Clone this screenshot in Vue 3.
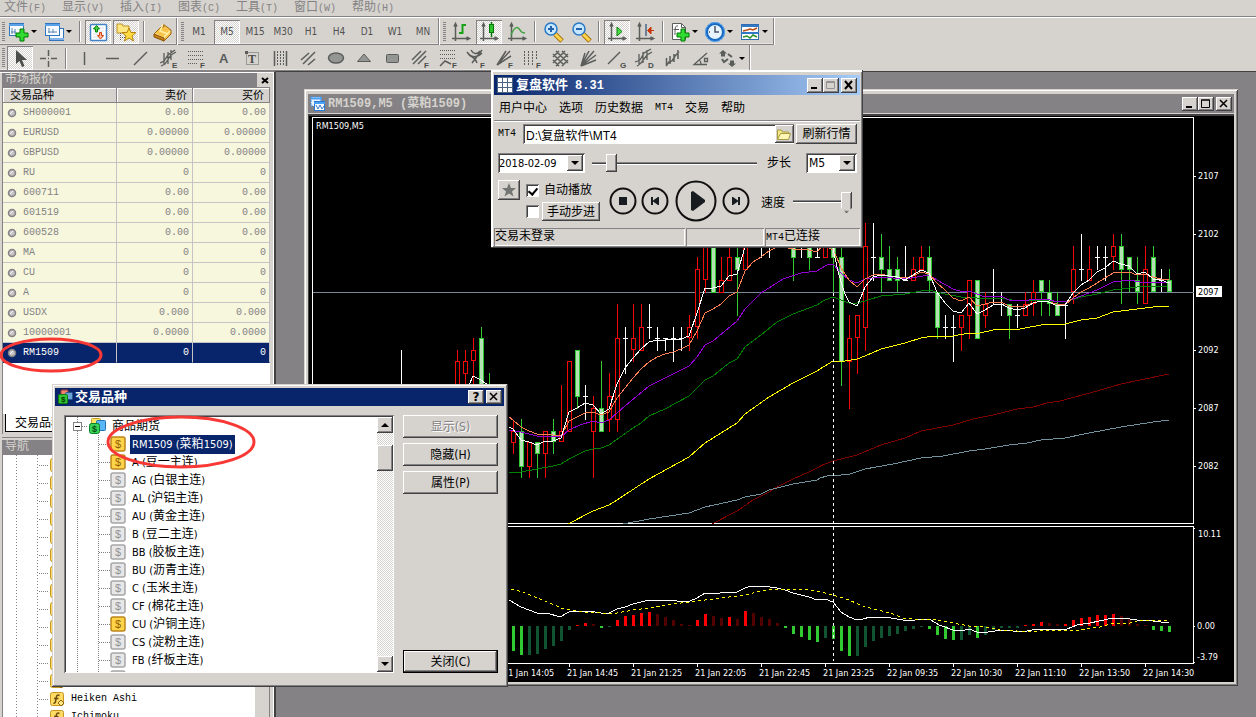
<script setup>
import { ref } from 'vue'

const menus = [['文件', 'F'], ['显示', 'V'], ['插入', 'I'], ['图表', 'C'], ['工具', 'T'], ['窗口', 'W'], ['帮助', 'H']]

const axes = '<path d="M6.500 4v17M3 18.500h17M5 6.500l1.500-3 1.500 3M17.500 17l3 1.500-3 1.500" stroke="#5a5d5a" stroke-width="1.500" fill="none"/>'
const plus = '<path d="M13 9h4v4h4v4h-4v4h-4v-4H9v-4h4z" fill="#31db31" stroke="#007b00"/>'
const letter = (c) => `<text x="16" y="22" font-size="8" font-weight="bold" font-family="Liberation Sans, sans-serif" fill="#4a4d4a">${c}</text>`
const g = (d, w = 1.5) => `<path d="${d}" stroke="#5a5d5a" stroke-width="${w}" fill="none"/>`
const glass = (sign) => `<path d="M14 14l7 7" stroke="#a57110" stroke-width="5"/><path d="M14 14l6.500 6.500" stroke="#ffd34a" stroke-width="3"/><circle cx="10" cy="9" r="6" fill="#c6e7ff" stroke="#2979c6" stroke-width="1.500"/><path d="${sign}" stroke="#2161ad" stroke-width="2"/>`

const icons = {
  order: '<rect x="2.500" y="3.500" width="14" height="12" fill="#f7fbff" stroke="#3175bd"/><path d="M2 5h15" stroke="#5aa2e7" stroke-width="2"/><path d="M5 8v6M4 12h5M8 9v5" stroke="#5a86ad" fill="none"/>' + plus,
  profiles: '<rect x="7.500" y="8.500" width="14" height="12" fill="#f7fbff" stroke="#3175bd"/><path d="M8 19h14" stroke="#84b2e7" stroke-width="2"/><rect x="3.500" y="3.500" width="14" height="12" fill="#f7fbff" stroke="#3175bd"/><path d="M3 5h15" stroke="#5aa2e7" stroke-width="2"/><path d="M6 12h9M7 8v5M11 9v4" stroke="#5a86ad"/>',
  watch: '<rect x="4.500" y="4.500" width="16" height="16" rx="1" fill="#fff" stroke="#4282c6" stroke-width="1.500"/><path d="M7 8h11M7 11h11M7 14h11M7 17h11" stroke="#d6dfe7"/><path d="M10.500 5.500l3 3.500h-2v3h-2V9h-2z" fill="#4ad34a" stroke="#008200"/><path d="M14.500 19l-3-3.500h2v-3h2v3h2z" fill="#ffb694" stroke="#d63c08"/>',
  navigator: '<path d="M3 6V4h5l1 2h6v7H3z" fill="#ffe784" stroke="#bd9221"/><path d="M6.500 13v8M8 17.500h3" stroke="#525552" stroke-dasharray="1 1"/><path d="M15 8l2 4.500h5l-4 3.500 1.500 5-4.500-3-4.500 3 1.500-5-4-3.500h5z" fill="#ffdb42" stroke="#b58210"/>',
  book: '<path d="M4 14l7-7 3 0-1-3 8 6v4l-7 7z" fill="#f7c34a" stroke="#9c6510"/><path d="M5 14l8 4 7-7M13 4l-3 7 8 3" fill="none" stroke="#ffefa5" stroke-width="1.500"/><path d="M4 14v3l10 4v-3z" fill="#c67d18" stroke="#8c5508"/>',
  bars: axes + '<path d="M13.500 4v10M13 13h-3M14 5h3" stroke="#18a218" stroke-width="2"/>',
  candle: axes + '<path d="M14.500 2v15" stroke="#087508" stroke-width="1.500"/><rect x="12.500" y="4.500" width="4" height="8" fill="#29c329" stroke="#087508"/>',
  line: axes + '<path d="M6 15c3-7 6-10 9-5 1 2 3 3 5 3" fill="none" stroke="#42a242" stroke-width="1.500"/>',
  zoomIn: glass('M7 9h6M10 6v6'),
  zoomOut: glass('M7 9h6'),
  scroll: axes + '<path d="M12 7l5 4.500-5 4.500z" fill="#4ade4a" stroke="#087d08"/>',
  shift: axes + '<path d="M13 4v12" stroke="#4a6584" stroke-width="1.500"/><path d="M21 10.500h-6M18 7l-3.500 3.500L18 14z" fill="#d63408" stroke="#c63408"/>',
  indicator: '<path d="M4.500 3.500h9l4 4v12h-13z" fill="#fff" stroke="#5a5d5a"/><path d="M13.500 3.500v4h4M10 6c-3-1-3 3-3 9M5.500 9.500H11" fill="none" stroke="#5a5d5a"/>' + plus,
  clock: '<circle cx="12" cy="12" r="8.500" fill="#e7f3ff" stroke="#1869bd" stroke-width="3"/><circle cx="12" cy="12" r="9.500" fill="none" stroke="#5aaaf7"/><path d="M12 7v5h4M12 6v1M6 12h1" fill="none" stroke="#4a5563" stroke-width="1.500"/>',
  template: '<rect x="3.500" y="4.500" width="17" height="15" fill="#fff" stroke="#316dad"/><path d="M3 6h18M3 13h18" stroke="#3179c6" stroke-width="2"/><path d="M5 11l4-1 3-1 3 1 4-2" stroke="#bd4910" fill="none" stroke-width="1.500"/><path d="M5 17l4-1 3 2 3-3 4 2" stroke="#299229" fill="none" stroke-width="1.500"/>',
  cursor: '<path d="M8 4v14l3.500-3 2.500 6 2.500-1-2.500-6H19z" fill="#4a4d4a"/>',
  cross: g('M12.500 4v6M12.500 15v6M4 12.500h6M15 12.500h6M12 12.500h1'),
  vline: g('M12.500 6v13'),
  hline: g('M6 12.500h13'),
  trend: g('M6 19L19 6'),
  channelE: g('M4 17l4-2 4-6 7-5M5 20l4-2 6-9 5-3M8 7v12M12 6v12M15 4v10', 1.3) + letter('E'),
  fiboF: '<path d="M4 5.500h15M4 9.500h15M4 13.500h15M4 17.500h9" stroke="#5a5d5a" stroke-dasharray="1 1"/>' + letter('F'),
  textA: '<text x="7" y="17" font-size="13" font-weight="bold" font-family="Liberation Sans, sans-serif" fill="#5a5d5a">A</text>',
  label: '<rect x="6.500" y="6.500" width="12" height="12" fill="none" stroke="#5a5d5a" stroke-dasharray="1 1"/><rect x="5" y="5" width="3" height="3" fill="#5a5d5a"/><text x="8" y="17" font-size="12" font-weight="bold" font-family="Liberation Serif, serif" fill="#4a4d4a">T</text>',
  cycles: g('M6.500 5v15M18.500 5v15') + '<path d="M9.500 5v15M12.500 5v15M15.500 5v15" stroke="#5a5d5a" stroke-dasharray="2 1"/>',
  parallels: g('M5 14l8-7M7 18L19 6M12 19l7-6'),
  ellipse: '<ellipse cx="12" cy="12" rx="7.500" ry="5" fill="#949694" stroke="#5a5d5a" stroke-width="1.500"/>',
  triangle: '<path d="M12 8l6.500 7.500h-13z" fill="#949694" stroke="#5a5d5a"/>',
  rect: '<rect x="6.500" y="8.500" width="12" height="8" rx="1" fill="#949694" stroke="#5a5d5a"/>',
  fibChannel: g('M4 14l9-9M5 18L18 5M10 18l8-8') + letter('F'),
  fibExpand: '<path d="M4 4.500h16M4 8.500h16M4 12.500h16" stroke="#5a5d5a" stroke-dasharray="1 1"/>' + g('M4 20l5-5 6 3') + letter('F'),
  fibArc: g('M3 6c4 6 10 6 15 1M7 4c2 4 6 5 9 1M8 17L18 4M5 9c4 2 7 4 8 8') + letter('F'),
  fibFan: g('M5 19L18 5M5 19L19 10M5 19L14 5') + letter('F'),
  fibTime: '<path d="M4.500 5v14M8.500 5v14M12.500 5v14M16.500 5v9" stroke="#5a5d5a" stroke-dasharray="2 1"/>' + letter('F'),
  grid: g('M5 8l11 11M5 14l6 6M8 5l12 12M14 5l6 6M5 17L17 5M5 11l6-6M8 20L20 8M14 20l6-6'),
  fan: g('M5 20L18 5M5 20L13 5M5 20L20 9M5 20L20 14M5 20L9 7'),
  gann: g('M4 18L16 6') + letter('G'),
  deviation: g('M3 16l5-2 4-7 7-4M5 20l4-3 6-8 5-3M7 8v11M11 6v11M15 4v10', 1.3) + letter('D'),
  regression: g('M6 20l3-4 3-1 3-5 4-4M6.500 12v8M10 10v8M14 8v8M18 4v9', 1.5),
  angle: g('M19 7L6 18.500h13M11 14c2 1 2 2 2 4M16.500 12.500h3v3h-3z', 1.3),
  arrows: '<path d="M8 4l4 3.500-2 0v3H6v-3H4zM17 21l-4-3.500h2v-3h4v3h2z" fill="#5a5d5a"/><path d="M7 13l2 3 4-3M13 8l4 3" stroke="#5a5d5a" stroke-width="2" fill="none"/>'
}

const fileTools = [
  { i: 'order', n: '新订单', drop: true }, { i: 'profiles', n: '图表配置', drop: true }, null,
  { i: 'watch', n: '市场报价', on: true }, { i: 'navigator', n: '导航', on: true }, null, { i: 'book', n: '终端' }
]
const periods = ['M1', 'M5', 'M15', 'M30', 'H1', 'H4', 'D1', 'W1', 'MN'].map((t) => ({ t, n: t, on: t === 'M5' }))
const chartTools = [
  { i: 'bars', n: '柱状图' }, { i: 'candle', n: '蜡烛图', on: true }, { i: 'line', n: '折线图' }, null,
  { i: 'zoomIn', n: '放大' }, { i: 'zoomOut', n: '缩小' }, null,
  { i: 'scroll', n: '自动滚动', on: true }, { i: 'shift', n: '图表平移' }, null,
  { i: 'indicator', n: '指标', drop: true }, { i: 'clock', n: '周期', drop: true }, { i: 'template', n: '模板', drop: true }
]
const drawTools = [
  { i: 'cursor', n: '光标', on: true }, { i: 'cross', n: '十字准线' }, null,
  ...['vline', 'hline', 'trend', 'channelE', 'fiboF', 'textA', 'label', 'cycles', 'parallels', 'ellipse', 'triangle', 'rect',
    'fibChannel', 'fibExpand', 'fibArc', 'fibFan', 'fibTime', 'grid', 'fan', 'gann', 'deviation', 'regression', 'angle'].map((i) => ({ i, n: i })),
  { i: 'arrows', n: '箭头', drop: true }
]
const bands = [[fileTools, periods, chartTools], [drawTools]]

const quotes = [
  ['SH000001', '0.00'], ['EURUSD', '0.00000'], ['GBPUSD', '0.00000'], ['RU', '0'], ['600711', '0.00'], ['601519', '0.00'],
  ['600528', '0.00'], ['MA', '0'], ['CU', '0'], ['A', '0'], ['USDX', '0.000'], ['10000001', '0.0000'], ['RM1509', '0']
]

const symbols = [
  ['RM1509', '菜粕', '1509', true], ['A', '豆一主连', '', true], ['AG', '白银主连', ''], ['AL', '沪铝主连', ''], ['AU', '黄金主连', ''],
  ['B', '豆二主连', ''], ['BB', '胶板主连', ''], ['BU', '沥青主连', ''], ['C', '玉米主连', ''], ['CF', '棉花主连', ''],
  ['CU', '沪铜主连', '', true], ['CS', '淀粉主连', ''], ['FB', '纤板主连', ''], ['']
]
const navItems = [...Array(13).fill(''), 'Heiken Ashi', 'Ichimoku']

const position = ref(9)
const speed = ref(100)
const auto = ref(true)
const manual = ref(false)
const path = ref('D:\\复盘软件\\MT4')

/* Candles: kind, x, high, low, body top, body bottom. r = rising, g = falling, w = doji */
const candles = [
  ['w', 401, 350, 410, 400, 400], ['r', 457, 350, 420, 361, 410], ['r', 465, 350, 410, 361, 374], ['r', 473, 338, 400, 350, 361],
  ['g', 481, 327, 410, 338, 400], ['g', 489, 373, 420, 390, 410],
  ['r', 513, 420, 454, 431, 443], ['g', 521, 419, 478, 431, 467], ['r', 529, 442, 478, 442, 467], ['g', 537, 442, 478, 442, 454],
  ['r', 545, 431, 478, 431, 454], ['g', 553, 419, 454, 431, 442], ['r', 561, 385, 442, 431, 442], ['r', 569, 361, 432, 361, 432],
  ['g', 577, 350, 409, 350, 397], ['w', 585, 385, 420, 396, 396], ['r', 593, 396, 478, 408, 432], ['g', 601, 361, 432, 408, 432],
  ['r', 609, 373, 432, 396, 420], ['r', 617, 304, 432, 338, 420], ['w', 625, 327, 374, 338, 338], ['r', 633, 304, 362, 338, 350],
  ['r', 641, 304, 351, 327, 351], ['w', 649, 304, 339, 327, 327], ['w', 657, 327, 351, 338, 338], ['w', 665, 338, 351, 338, 338],
  ['w', 673, 327, 362, 338, 338], ['w', 681, 327, 351, 338, 338], ['r', 689, 315, 351, 327, 338], ['r', 697, 257, 339, 269, 327],
  ['r', 705, 234, 293, 234, 280], ['g', 713, 234, 293, 240, 293], ['r', 721, 257, 293, 280, 293], ['r', 729, 240, 281, 257, 281],
  ['g', 737, 240, 316, 257, 270], ['r', 745, 234, 270, 240, 270], ['w', 761, 230, 258, 240, 240], ['w', 769, 230, 258, 240, 240],
  ['g', 793, 230, 281, 234, 258], ['w', 801, 230, 258, 240, 240], ['g', 809, 230, 270, 234, 258], ['w', 817, 230, 257, 257, 257],
  ['r', 825, 230, 258, 234, 258], ['g', 833, 230, 292, 234, 258], ['g', 841, 234, 386, 257, 362], ['r', 849, 315, 409, 338, 362],
  ['r', 857, 315, 374, 315, 338], ['r', 865, 223, 351, 246, 328], ['w', 873, 223, 281, 257, 257], ['g', 881, 234, 292, 257, 270],
  ['g', 889, 246, 281, 269, 281], ['g', 897, 257, 292, 269, 281], ['w', 905, 246, 281, 280, 280], ['r', 913, 257, 281, 269, 281],
  ['r', 921, 246, 270, 257, 270], ['g', 929, 246, 292, 257, 281], ['g', 937, 292, 339, 292, 328], ['w', 945, 315, 339, 327, 327],
  ['w', 953, 315, 362, 327, 327], ['r', 961, 315, 351, 315, 328], ['r', 969, 280, 339, 280, 316], ['g', 977, 280, 339, 280, 339],
  ['r', 985, 292, 328, 304, 316], ['w', 993, 269, 304, 292, 292], ['w', 1001, 292, 316, 304, 304], ['g', 1009, 304, 339, 304, 316],
  ['w', 1017, 304, 328, 315, 315], ['r', 1025, 292, 316, 304, 316], ['r', 1033, 280, 316, 292, 304], ['g', 1041, 280, 316, 280, 292],
  ['g', 1049, 280, 316, 292, 304], ['g', 1057, 292, 316, 304, 316], ['w', 1065, 304, 339, 305, 305], ['r', 1073, 246, 304, 269, 292],
  ['w', 1081, 234, 281, 269, 269], ['r', 1089, 246, 281, 269, 281], ['w', 1097, 246, 270, 257, 257], ['w', 1105, 246, 281, 257, 257],
  ['r', 1113, 234, 270, 246, 257], ['g', 1121, 234, 304, 246, 270], ['g', 1129, 257, 292, 257, 270], ['g', 1137, 257, 304, 280, 292],
  ['r', 1145, 246, 304, 269, 304], ['g', 1153, 246, 292, 257, 292], ['w', 1161, 269, 292, 280, 280], ['g', 1169, 269, 292, 280, 292]
].map(([k, x, h, l, t, b]) => ({ k, x, h, l, t, b }))
const ink = { r: '#f70808', g: '#31cb31', w: '#ffffff' }

/* Curve runs: origin x, origin y, then point pairs in thirds of a pixel */
const run = (ox, oy, s) => s.split(' ').map((p) => {
  const [x, y] = p.split(',').map(Number)
  return `${Math.round(ox + x / 3)},${Math.round(oy + y / 3)}`
}).join(' ')
const curves = [
  { c: '#800000', p: run(500, 240, '637,851 712,813 760,780 808,756 832,740 880,717 928,697 976,673') + ' ' + run(820, 350, '0,349 40,333 112,316 184,286 256,263 304,244 352,233 400,224 460,207 520,196 592,178 640,170 680,158 720,153 832,124 904,101 976,88 1048,73') },
  { c: '#7392a0', p: run(500, 240, '370,851 448,838 568,818 616,802 712,781 736,771 784,761 808,749 880,732 952,719') + ' ' + run(820, 350, '0,385 20,378 64,374 90,371 136,358 220,342 304,325 370,318 448,304 496,298 568,286 620,280 664,270 736,263 808,250 904,231 1000,217 1048,211') },
  { c: '#ffff00', p: run(500, 240, '205,851 280,812 328,796 352,779 448,716 568,652 616,609 712,548 736,521 808,470 880,430 952,392') + ' ' + run(820, 90, '0,836 40,814 76,814 112,807 136,797 184,778 256,760 304,744 340,737 400,737 448,728 480,730 520,721 600,717 664,706 736,703 784,691 832,683 880,667 928,661 1000,652 1048,649') },
  { c: '#008000', p: run(500, 240, '27,700 64,696 112,687 160,679 184,672 208,656 256,634 280,628 304,625 328,616 400,563 424,548 448,529 496,508 568,469 616,421 640,407 688,370 712,356 736,322 784,284 832,246 880,222 952,196') + ' ' + run(820, 90, '0,640 16,629 40,622 88,639 112,640 136,632 184,619 256,613 304,602 328,601 376,612 424,622 448,621 496,628 544,625 592,632 664,630 712,635 745,633 784,622 832,612 880,599 952,592 1040,589') },
  { c: '#9400d3', p: run(500, 240, '27,571 64,577 112,589 184,590 208,570 240,556 280,544 304,548 328,541 376,499 448,438 520,403 568,379 592,352 616,316 640,303 712,244 736,206 784,160 850,118 904,100 952,92') + ' ' + run(820, 90, '0,536 20,525 40,523 64,549 88,571 112,580 136,568 184,560 256,566 328,555 352,570 400,598 430,605 448,602 472,613 496,620 544,617 568,629 616,632 640,628 690,629 712,635 745,633 784,619 832,600 880,577 928,571 960,575 1040,576') },
  { c: '#ff7f50', p: run(500, 240, '27,531 40,540 64,562 88,572 112,582 136,583 160,586 184,587 208,543 232,530 256,520 280,517 304,526 328,517 352,475 376,445 400,415 424,388 448,365 472,352 496,343 520,335 544,327 568,316 592,273 616,218 640,206 664,193 688,168 712,155 736,93 760,65 784,50 808,32 830,22 864,24 880,28 904,26 928,29 952,36') + ' ' + run(820, 90, '10,465 40,480 52,503 64,533 88,570 112,592 136,567 160,556 184,553 208,557 232,560 256,563 280,557 304,547 328,552 352,578 376,601 400,624 424,634 448,622 472,647 496,642 520,637 544,637 568,648 592,652 616,649 640,638 664,633 688,637 712,643 736,644 760,625 784,607 808,594 832,578 856,563 880,548 904,547 928,545 952,555 976,552 1000,562 1024,567 1048,571') },
  { c: '#ffffff', p: '466,392 473,376 481,380 489,386' },
  { c: '#ffffff', p: run(500, 240, '27,562 40,568 64,600 88,605 112,615 136,603 160,604 184,594 208,517 232,503 256,489 280,496 304,522 328,508 352,432 376,385 400,355 424,327 448,305 472,300 496,301 520,298 544,298 568,287 592,220 616,143 640,145 664,138 688,108 712,102 736,20 760,0') },
  { c: '#ffffff', p: run(820, 90, '30,440 40,473 52,530 64,575 76,612 88,636 112,648 124,620 136,590 160,560 184,555 208,559 232,561 256,570 280,556 304,539 328,550 352,605 376,640 400,663 424,668 448,638 472,672 496,661 520,644 544,642 568,655 592,660 616,655 640,640 664,632 688,636 712,648 736,646 760,610 784,584 808,570 832,546 856,533 880,512 904,522 928,527 952,553 976,547 1000,568 1024,571 1048,580') },
  { c: '#ffffff', p: run(500, 520, '27,241 64,262 112,280 140,280 180,290 208,277 240,274 285,275 304,280 328,280 352,268 376,260 400,252 448,241 510,241 530,244 570,244 592,234 616,220 640,223 680,217 712,217 736,203 752,199 790,199 832,205 856,210 880,220 928,232 952,241 976,237 1000,247 1024,275 1048,292 1072,301 1088,296') + ' ' + run(870, 540, '0,232 45,232 100,241 135,241 160,238 184,241 208,256 250,270 272,274 296,268 320,276 355,276 395,271 430,273 470,273 500,268 590,268 620,256 660,250 730,233 780,236 800,241 850,242 896,249') },
  { c: '#ffff00', d: '3 3', p: run(500, 520, '33,206 70,215 112,233 150,250 184,264 220,271 256,276 310,280 350,278 400,271 448,265 496,256 568,246 616,240 664,235 736,226 784,214 832,208 900,208 950,212 1000,224 1048,241 1096,260') + ' ' + run(870, 540, '0,205 60,219 100,233 130,238 184,238 250,248 296,258 345,262 390,270 440,274 500,273 560,271 630,269 690,261 720,253 780,248 810,241 896,241') }
]

/* Histogram starts at x = 513 with an 8px step: G/g = falling bright/dark, R/r = rising bright/dark */
const hues = { G: '#31cb31', g: '#105531', R: '#ff0000', r: '#520000' }
const histogram = ('G25 G29 g29 g28 g23 g20 g15 g4 R1 R3 r2 G2 g1 R6 R10 R11 R13 R14 r12 r9 r6 r2 r1 R6 R12 r10 r8 R9 r7 R15 r13 r9 r7 r3 ' +
  'G2 G8 G11 G14 G16 g12 G13 G25 G30 g30 g21 g15 g12 g10 g8 g5 g3 g1 G3 G9 G13 G14 g14 g9 G12 g9 g4 g2 g2 g2 ' +
  'R1 R2 R4 r3 r2 R2 R6 R8 R9 R11 R11 R12 r10 r7 r2 r1 G4 G5 G6').split(' ').map((s, i) => {
  const h = Number(s.slice(1))
  const up = s[0].toLowerCase() === 'r'
  return { x: 512 + i * 8, y: up ? 626 - h : 626, h, c: hues[s[0]] }
})
const prices = [[2107, 176], [2102, 234], [2092, 350], [2087, 408], [2082, 466]]
const times = ['21 Jan 14:05', '21 Jan 14:45', '21 Jan 21:25', '21 Jan 22:05', '21 Jan 22:45', '21 Jan 23:25', '22 Jan 09:35', '22 Jan 10:30', '22 Jan 11:10', '22 Jan 13:50', '22 Jan 14:30']
</script>

<template>
  <div class="app">
    <nav class="menubar">
      <button v-for="m in menus" :key="m[1]" type="button">{{ m[0] }}<span class="half">({{ m[1] }})</span></button>
    </nav>
    <div v-for="(band, bi) in bands" :key="bi" class="band">
      <div v-for="(group, gi) in band" :key="gi" class="group">
        <i class="grip"></i>
        <template v-for="(tool, ti) in group" :key="ti">
          <i v-if="!tool" class="sep"></i>
          <button v-else type="button" class="tool" :class="{ on: tool.on, drop: tool.drop }" :aria-label="tool.n">
            <template v-if="tool.t">{{ tool.t }}</template>
            <svg v-else width="24" height="24" viewBox="0 0 24 24" v-html="icons[tool.i]"></svg>
            <i v-if="tool.drop" class="caret"></i>
          </button>
        </template>
      </div>
    </div>

    <div class="workspace">
      <aside class="side">
        <section class="panel quotes">
          <header class="ptitle"><span>市场报价</span><button type="button" aria-label="关闭市场报价"><svg width="9" height="9" viewBox="0 0 9 9"><path d="M1 2l6 5M7 2L1 7" stroke="#000" stroke-width="2" /></svg></button></header>
          <div class="pbody">
            <table>
              <colgroup><col class="c1" /><col class="c2" /><col /></colgroup>
              <thead><tr><th>交易品种</th><th>卖价</th><th>买价</th></tr></thead>
              <tbody>
                <tr v-for="q in quotes" :key="q[0]" :class="{ sel: q[0] === 'RM1509' }">
                  <td><svg width="10" height="10" viewBox="0 0 10 10"><circle cx="5" cy="5" r="3.500" fill="#c6c3c6" stroke="#848284" stroke-width="1.500" /><path d="M3 6l3-3" stroke="#f7f7f7" /></svg>{{ q[0] }}</td>
                  <td>{{ q[1] }}</td><td>{{ q[1] }}</td>
                </tr>
              </tbody>
            </table>
            <div class="tabs"><button type="button">交易品种</button></div>
          </div>
        </section>
        <section class="panel nav">
          <header class="ptitle"><span>导航</span></header>
          <div class="nbody">
            <ul>
              <li v-for="(n, i) in navItems" :key="i">
                <svg width="16" height="16" viewBox="0 0 16 16"><rect x="1.500" y="1.500" width="13" height="13" rx="2" fill="#ffdb63" stroke="#c69621" /><path d="M10.500 4.500c-2-1-3 0-3.200 2l-.8 4c-.3 1.500-1 2-2 1.500M5 7.500h4.500" fill="none" stroke="#6b4d10" stroke-width="1.500" /><path d="M12 9l3 3-3 3-3-3z" fill="#ffe784" stroke="#8c6510" /></svg>
                <span>{{ n }}</span>
              </li>
            </ul>
            <i class="ntrack"></i>
          </div>
        </section>
      </aside>

      <main class="mdi">
        <section class="chartwin">
          <header>
            <svg width="16" height="16" viewBox="0 0 16 16"><rect x="1" y="1" width="10" height="9" fill="#e7f3ff" stroke="#4292e7" stroke-dasharray="2 1" /><rect x="4.500" y="5.500" width="10" height="9" fill="#fff" stroke="#2979d6" /><path d="M1 2.500h11M4 7h11" stroke="#4aa2f7" stroke-width="2" /><path d="M6 9l2 4 2-4 2 4 2-3" fill="none" stroke="#317dce" /></svg>
            <h2>RM1509,M5 (<span>菜粕</span>1509)</h2>
            <button type="button" class="wb raised" aria-label="最小化图表"><svg width="16" height="14" viewBox="0 0 16 14"><path d="M4 10h6" stroke="#000" stroke-width="2" /></svg></button>
            <button type="button" class="wb raised" aria-label="最大化图表"><svg width="16" height="14" viewBox="0 0 16 14"><path d="M3.500 3v7.500h8V3zM3 3h9" fill="none" stroke="#000" /></svg></button>
            <button type="button" class="wb raised last" aria-label="关闭图表"><svg width="16" height="14" viewBox="0 0 16 14"><path d="M4 3l7 7M11 3l-7 7" stroke="#000" stroke-width="1.500" /></svg></button>
          </header>
          <svg class="chart" viewBox="309 116 925 566" preserveAspectRatio="xMinYMin meet">
            <g fill="none" shape-rendering="crispEdges">
              <path d="M312.500 117.500h881v406h-881zM312.500 526.500h881v137h-881z" stroke="#fff" />
              <path d="M313 292.500h881" stroke="#778899" />
              <g v-for="c in candles" :key="c.x" :stroke="ink[c.k]">
                <path :d="`M${c.x + .5} ${c.h}V${c.l}`" />
                <path v-if="c.k === 'w'" :d="`M${c.x - 2} ${c.t + .5}h5`" />
                <rect v-else :x="c.x - 1.5" :y="c.t + .5" width="4" :height="c.b - c.t - 1" :fill="c.k === 'g' ? '#b5dfb5' : '#000'" />
              </g>
              <rect v-for="b in histogram" :key="b.x" :x="b.x" :y="b.y" width="3" :height="b.h" :fill="b.c" />
              <polyline v-for="(c, i) in curves" :key="i" :points="c.p" :stroke="c.c" :stroke-dasharray="c.d" />
              <path d="M833.500 293V661" stroke="#fff" stroke-dasharray="3 3" />
              <path v-for="p in prices" :key="p[0]" :d="`M1194 ${p[1] + .5}h2`" stroke="#fff" />
              <path d="M1194 528.500h1M1194 626.500h1M1194 662.500h1" stroke="#fff" />
              <path v-for="(t, i) in times" :key="t" :d="`M${505.5 + i * 64} 664v3`" stroke="#fff" />
              <rect x="1196" y="286" width="26" height="11" fill="#fff" />
            </g>
            <g class="lbl">
              <text x="316" y="129" class="head">RM1509,M5</text>
              <text v-for="p in prices" :key="p[0]" x="1198" :y="p[1] + 3">{{ p[0] }}</text>
              <text x="1198" y="295" class="now">2097</text>
              <text x="1198" y="537">10.11</text><text x="1197" y="629">0.00</text><text x="1197" y="660">-3.79</text>
              <text v-for="(t, i) in times" :key="t" :x="503 + i * 64" y="676">{{ t }}</text>
            </g>
          </svg>
        </section>
      </main>
    </div>

    <section class="replay">
      <header>
        <svg width="16" height="16" viewBox="0 0 16 16"><rect width="16" height="16" fill="#4a6584" /><path d="M1 1h4v4H1zM6 1h4v4H6zM11 1h4v4h-4zM1 6h4v4H1zM6 6h4v4H6zM11 6h4v4h-4zM1 11h4v4H1zM6 11h4v4H6zM11 11h4v4h-4z" fill="#fff" /></svg>
        <h2>复盘软件 <span>8.31</span></h2>
        <button type="button" class="wb raised" aria-label="最小化"><svg width="16" height="15" viewBox="0 0 16 15"><path d="M4 10h6" stroke="#000" stroke-width="2" /></svg></button>
        <button type="button" class="wb raised" aria-label="最大化" disabled><svg width="16" height="15" viewBox="0 0 16 15"><path d="M3.500 3.500h8v7h-8zM3 4.500h9" fill="none" stroke="#949294" /></svg></button>
        <button type="button" class="wb raised last" aria-label="关闭"><svg width="16" height="15" viewBox="0 0 16 15"><path d="M4 3l7 8M11 3l-7 8" stroke="#000" stroke-width="2" /></svg></button>
      </header>
      <nav>
        <button type="button">用户中心</button><button type="button">选项</button><button type="button">历史数据</button><button type="button" class="half">MT4</button><button type="button">交易</button><button type="button">帮助</button>
      </nav>
      <div class="row r1">
        <label for="path" class="half">MT4</label>
        <div class="pathbox"><input id="path" v-model="path" type="text" /><button type="button" class="raised" aria-label="浏览"><svg width="16" height="14" viewBox="0 0 16 14"><path d="M1.500 12V3h4l1 2h6v2" fill="#f7e784" stroke="#a59a42" /><path d="M1.500 12.500l3-6h10l-2 6z" fill="#fff7b5" stroke="#a59a42" /></svg></button></div>
        <button type="button" class="btn raised refresh">刷新行情</button>
      </div>
      <div class="row r2">
        <div class="combo date"><select aria-label="日期"><option>2018-02-09</option></select><i class="arrow raised"></i></div>
        <input v-model="position" class="range" type="range" aria-label="进度" />
        <label for="step">步长</label>
        <div class="combo step"><select id="step"><option>M5</option></select><i class="arrow raised"></i></div>
      </div>
      <div class="row r3">
        <button type="button" class="btn raised star" aria-label="收藏"><svg width="16" height="16" viewBox="0 0 16 16"><path d="M8 1l2 5h5l-4 3.500 1.500 5L8 11.500l-4.500 3 1.500-5L1 6h5z" fill="#737573" /></svg></button>
        <div class="opts">
          <label><input v-model="auto" type="checkbox" />自动播放</label>
          <div><input v-model="manual" type="checkbox" aria-label="手动步进" /><button type="button" class="btn raised">手动步进</button></div>
        </div>
        <div class="play">
          <button type="button" aria-label="停止"><svg width="28" height="28" viewBox="0 0 28 28"><circle cx="14" cy="14" r="12.500" /><path d="M10 10h8v8h-8z" /></svg></button>
          <button type="button" aria-label="上一步"><svg width="28" height="28" viewBox="0 0 28 28"><circle cx="14" cy="14" r="12.500" /><path d="M10 10h2v3.500l5-3.500h1v8h-1l-5-3.500V18h-2z" /></svg></button>
          <button type="button" aria-label="播放"><svg width="42" height="42" viewBox="0 0 42 42"><circle cx="21" cy="21" r="19.500" /><path d="M16 12l2-1 12 9v2l-12 9-2-1z" /></svg></button>
          <button type="button" aria-label="下一步"><svg width="28" height="28" viewBox="0 0 28 28"><circle cx="14" cy="14" r="12.500" /><path d="M18 10h-2v3.500L11 10h-1v8h1l5-3.500V18h2z" /></svg></button>
        </div>
        <label for="speed" class="spd">速度</label>
        <input id="speed" v-model="speed" class="range point" type="range" />
      </div>
      <footer><span>交易未登录</span><span></span><span><b class="half">MT4</b>已连接</span></footer>
    </section>

    <section class="dialog">
      <header>
        <svg width="16" height="16" viewBox="0 0 16 16"><rect x="4" y="1" width="7" height="6" rx="1" fill="#ef8273" stroke="#a53c31" /><rect x="8.500" y="3.500" width="7" height="7" rx="1" fill="#6ba2d6" stroke="#29558c" /><rect x="1.500" y="5.500" width="9" height="9" rx="1" fill="#31c331" stroke="#107d10" /><text x="4" y="13" font-size="8" font-weight="bold" font-family="Liberation Sans, sans-serif" fill="#003800">$</text></svg>
        <h2>交易品种</h2>
        <button type="button" class="wb raised" aria-label="帮助">?</button>
        <button type="button" class="wb raised last" aria-label="关闭对话框"><svg width="16" height="14" viewBox="0 0 16 14"><path d="M4 3l7 7M11 3l-7 7" stroke="#000" stroke-width="1.500" /></svg></button>
      </header>
      <div class="dbody">
        <div class="list">
          <ul>
            <li class="root">
              <i class="box"></i><i class="dots"></i>
              <svg width="18" height="18" viewBox="0 0 18 18"><rect x="3.500" y="1.500" width="9" height="9" rx="1" fill="#ffe763" stroke="#c69a29" /><rect x="8.500" y="3.500" width="9" height="10" rx="1" fill="#5ab6f7" stroke="#2175b5" /><rect x="1.500" y="6.500" width="10" height="10" rx="2" fill="#39d35a" stroke="#088229" /><text x="4" y="15" font-size="9" font-weight="bold" font-family="Liberation Sans, sans-serif" fill="#004d10">$</text></svg>
              <span>商品期货</span>
            </li>
            <li v-for="(s, i) in symbols" :key="i" :class="{ sel: i === 0 }">
              <i class="dots"></i>
              <svg width="16" height="16" viewBox="0 0 16 16" :class="s[3] ? 'gold' : 'grey'"><rect x="1" y="1" width="14" height="14" rx="2" stroke-width="1.500" /><text v-if="s[0]" x="5" y="12" font-size="11" font-family="Liberation Sans, sans-serif">$</text></svg>
              <span v-if="s[0]">{{ s[0] }} (<b>{{ s[1] }}</b>{{ s[2] }})</span>
            </li>
          </ul>
          <div class="scroll"><button type="button" class="raised up" aria-label="向上滚动"></button><i class="raised thumb"></i><button type="button" class="raised down" aria-label="向下滚动"></button></div>
        </div>
        <div class="actions">
          <button type="button" class="btn raised" disabled>显示(S)</button>
          <button type="button" class="btn raised">隐藏(H)</button>
          <button type="button" class="btn raised">属性(P)</button>
          <button type="button" class="btn raised close">关闭(C)</button>
        </div>
      </div>
    </section>

    <svg class="marks" width="260" height="480" viewBox="0 0 260 480" aria-hidden="true">
      <g fill="none" stroke="#f73835" stroke-width="3"><ellipse cx="51" cy="355" rx="50" ry="16" /><ellipse cx="181" cy="442" rx="73" ry="25" /></g>
    </svg>
  </div>
</template>

<style>
body { background: #848284; }
</style>

<style scoped>
.app { position: relative; display: flex; flex-direction: column; height: 100vh; overflow: hidden; background: #d6d3ce; color: #000; font: 12px/16px "DejaVu Sans Condensed", "Noto Sans CJK SC", sans-serif; }
.app * { box-sizing: border-box; }
button { margin: 0; padding: 0; border: 0; background: none; color: inherit; font: inherit; }
h2 { margin: 0; font-weight: bold; font-size: 13px; }
svg { display: block; flex: none; }
.half { font-family: "Liberation Mono", "Noto Sans CJK SC", monospace; font-size: 10px; font-weight: normal; }
.raised { background: #d6d3ce; box-shadow: inset -1px -1px #424142, inset 1px 1px #fff, inset -2px -2px #848284; }

.menubar { display: flex; gap: 16px; flex: none; height: 18px; padding-left: 4px; color: #848284; border-bottom: 1px solid #fff; box-shadow: inset 0 -1px #848284; }
.menubar button { height: 14px; line-height: 14px; white-space: nowrap; width: 42px; text-align: left; }

.band { display: flex; flex: none; height: 27px; }
.band + .band { height: 26px; }
.group { display: flex; align-items: center; gap: 2px; padding: 0 2px; border-right: 1px solid #fff; box-shadow: inset -1px 0 #848284, inset 0 -1px #848284, inset 0 -2px #e7e3de; }
.group + .group { padding: 0 3px; }
.grip { width: 3px; height: 20px; background: repeating-linear-gradient(#848284 0 1px, #d6d3ce 1px 2px); }
.sep { width: 2px; height: 21px; margin: 0 2px; background: #848284; border-right: 1px solid #fff; }
.tool { display: flex; align-items: center; justify-content: center; width: 26px; height: 24px; color: #525152; font-size: 10px; }
.tool.on { background: conic-gradient(#fff 25%, #d6d3ce 0 50%, #fff 0 75%, #d6d3ce 0) 0 0/2px 2px; box-shadow: inset 1px 1px #848284, inset -1px -1px #fff; }
.tool.drop { width: 33px; justify-content: flex-start; }
.caret { flex: none; border: 3px solid transparent; border-top-color: #000; border-bottom: 0; }

.workspace { flex: 1; display: flex; min-height: 0; }
.side { display: flex; flex-direction: column; flex: none; width: 276px; padding: 1px 3px 0 2px; border-right: 2px solid #424142; border-top: 1px solid #848284; box-shadow: inset 0 1px #fff, inset -1px 0 #fff; }
.ptitle { display: flex; height: 14px; margin-right: 1px; }
.ptitle span { flex: 1; padding-left: 3px; background: #848284; color: #d6d3ce; line-height: 13px; }
.ptitle button { width: 13px; padding-left: 4px; }
.quotes { height: 362px; }
.pbody { height: 347px; border-left: 1px solid #848284; border-top: 1px solid #848284; background: #fff; display: flex; flex-direction: column; width: 268px; }
table { width: 100%; table-layout: fixed; border-collapse: separate; border-spacing: 0; }
.c1 { width: 114px; } .c2 { width: 76px; }
th { height: 15px; padding: 0; background: #d6d3ce; font-weight: normal; font-size: 11px; line-height: 14px; text-align: right; padding-right: 6px; box-shadow: inset -1px -1px #848284, inset 1px 1px #fff; }
th:first-child { text-align: left; padding-left: 7px; }
td { height: 20px; padding: 0 3px 0 0; background: #f7f7de; border-right: 1px solid #c6c3c6; border-bottom: 1px solid #c6c3c6; color: #848284; font: 10px/19px "Liberation Mono", monospace; text-align: right; }
td:first-child { display: flex; align-items: center; gap: 6px; padding-left: 4px; }
.sel td { background: #08246b; color: #fff; border-bottom-color: #08246b; }
.tabs { margin-top: auto; height: 20px; padding-left: 2px; background: #d6d3ce; }
.tabs button { width: 60px; height: 18px; padding-left: 9px; text-align: left; background: #fff; border-left: 1px solid #000; border-bottom: 1px solid #000; line-height: 16px; white-space: nowrap; }
.nav { flex: 1; display: flex; flex-direction: column; min-height: 0; margin-top: 2px; padding-top: 2px; border-top: 1px solid #848284; }
.nbody { flex: 1; display: flex; min-height: 0; overflow: hidden; width: 268px; border: solid #848284; border-width: 1px 1px 0; background: #fff; }
.nbody ul { flex: 1; margin: 0; padding: 1px 0 0 34px; list-style: none; background: repeating-linear-gradient(#848284 0 1px, #fff 1px 3px) 13px 0/1px 100% no-repeat, repeating-linear-gradient(#848284 0 1px, #fff 1px 3px) 34px 0/1px 100% no-repeat; }
.nbody li { display: flex; align-items: center; height: 18px; gap: 6px; padding-left: 12px; background: repeating-linear-gradient(90deg, #848284 0 1px, transparent 1px 2px) 2px 9px/10px 1px no-repeat; font: 10px/18px "Liberation Mono", monospace; }
.ntrack { width: 15px; background: #d6d3ce; box-shadow: inset 1px 0 #fff; }

.mdi { flex: 1; position: relative; background: #848284; border-top: 1px solid #424142; }
.chartwin { position: absolute; inset: 17px 18px 31px 28px; display: flex; flex-direction: column; padding: 5px 4px 4px; background: #d6d3ce; box-shadow: inset 1px 1px #d6d3ce, inset -1px -1px #424142, inset 2px 2px #fff, inset -2px -2px #848284; }
.chartwin header { display: flex; align-items: center; height: 19px; padding: 0 2px; background: #848284; color: #d6d3ce; }
.chartwin h2 { flex: 1; padding-left: 2px; font: bold 12px/18px "Liberation Mono", "Noto Sans CJK SC", monospace; }
.wb { width: 16px; height: 14px; color: #000; font: bold 12px/13px "DejaVu Sans", sans-serif; }
.wb.last { margin-left: 2px; }
.chart { flex: 1; width: 100%; min-height: 0; margin-top: 1px; background: #000; border: solid #424142; border-width: 2px 0 0 1px; overflow: hidden; }
.lbl { fill: #fff; font: 9px "DejaVu Sans Condensed", sans-serif; }
.now { fill: #000; }

.replay { position: absolute; left: 491px; top: 70px; width: 372px; padding: 5px 3px 2px; background: #d6d3ce; box-shadow: inset -1px -1px #424142, inset 2px 2px #fff, inset -2px -2px #848284; }
.replay header { display: flex; align-items: center; height: 20px; padding: 0 3px; background: linear-gradient(90deg, #08246b, #a5cbf7); color: #fff; }
.replay h2 { flex: 1; padding-left: 3px; line-height: 20px; }
.replay h2 span { font-family: "Liberation Mono", monospace; font-size: 12px; margin-left: 3px; }
.replay .wb { height: 15px; }
.replay nav { display: flex; gap: 12px; height: 27px; padding: 0 0 0 5px; border-bottom: 1px solid #fff; box-shadow: inset 0 -1px #848284; }
.row { display: flex; align-items: center; padding: 0 3px 0 4px; }
.r1 { height: 20px; margin-top: 2px; }
.pathbox { display: flex; align-items: center; flex: 1; height: 20px; margin: 0 2px 0 7px; background: #fff; box-shadow: inset 1px 1px #848284, inset -1px -1px #fff, inset 2px 2px #424142; }
.pathbox input { flex: 1; min-width: 0; height: 18px; padding: 0 0 0 3px; border: 0; outline: 0; background: none; font: 12px "Liberation Sans", "Noto Sans CJK SC", sans-serif; }
.pathbox button { width: 19px; height: 18px; padding: 2px 1px; }
.btn { white-space: nowrap; text-align: center; }
.refresh { width: 61px; height: 20px; }
.r2 { height: 20px; margin-top: 9px; }
.combo { position: relative; height: 20px; background: #fff; box-shadow: inset 1px 1px #848284, inset -1px -1px #fff, inset 2px 2px #424142; }
.combo select { appearance: none; width: 100%; height: 20px; padding: 0 0 0 3px; border: 0; outline: 0; background: none; color: #000; font: 11px "DejaVu Sans Condensed", sans-serif; }
.step select { font-size: 12px; }
.arrow { position: absolute; right: 2px; top: 2px; width: 16px; height: 16px; pointer-events: none; }
.arrow::after { content: ""; position: absolute; left: 4px; top: 6px; border: 4px solid transparent; border-top-color: #000; border-bottom: 0; }
.date { width: 87px; margin-right: 7px; } .date select { padding-left: 1px; }
.step { width: 51px; margin-left: auto; }
.range { appearance: none; width: 165px; height: 18px; margin: 0 10px 0 0; background: linear-gradient(#848284 0 1px, #424142 1px 2px, #fff 2px 3px) 0 8px/100% 3px no-repeat; }
.range::-webkit-slider-thumb { appearance: none; width: 11px; height: 18px; background: #d6d3ce; box-shadow: inset -1px -1px #424142, inset 1px 1px #fff, inset -2px -2px #848284; }
.r3 { height: 42px; margin-top: 7px; align-items: flex-start; }
.star { width: 22px; height: 20px; padding: 2px 3px; }
.opts { width: 75px; margin: 1px 0 0 6px; }
.opts label, .opts div { display: flex; align-items: center; height: 18px; white-space: nowrap; }
.opts div { margin-top: 3px; height: 19px; }
.opts input { appearance: none; flex: none; width: 13px; height: 13px; margin: 0 5px 0 0; background: #fff; box-shadow: inset 1px 1px #848284, inset -1px -1px #fff, inset 2px 2px #424142; }
.opts div input { margin-right: 3px; }
.opts input:checked::after { content: ""; display: block; width: 4px; height: 7px; margin: 2px 0 0 4px; border: solid #000; border-width: 0 2px 2px 0; transform: rotate(40deg); }
.opts button { width: 58px; height: 19px; }
.play { display: flex; align-items: center; gap: 4px; height: 42px; margin-left: 8px; }
.play circle { fill: none; stroke: #101010; stroke-width: 2; }
.play path { fill: #181c21; }
.play button:nth-child(3) { margin: 0 1px 0 2px; }
.spd { margin: 15px 0 0 11px; white-space: nowrap; }
.range.point { width: 59px; min-width: 0; height: 21px; margin: 12px 0 0 8px; }
.point::-webkit-slider-thumb { height: 21px; clip-path: polygon(0 0, 100% 0, 100% 75%, 50% 100%, 0 75%); background: linear-gradient(#d6d3ce 85%, #424142); }
.replay footer { display: grid; grid-template-columns: 191px 78px 1fr; gap: 1px; height: 18px; margin-top: 6px; }
.replay footer span { padding-left: 1px; line-height: 17px; box-shadow: inset 1px 1px #848284, inset -1px -1px #fff; white-space: nowrap; }

.dialog { position: absolute; left: 52px; top: 384px; width: 456px; padding: 4px 4px 14px 3px; background: #d6d3ce; box-shadow: inset -1px -1px #424142, inset 1px 1px #d6d3ce, inset -2px -2px #848284, inset 2px 2px #fff; }
.dialog header { display: flex; align-items: center; height: 18px; padding: 0 2px; background: #08246b; color: #fff; }
.dialog h2 { flex: 1; padding-left: 2px; line-height: 18px; }
.dbody { display: flex; gap: 9px; padding: 9px 6px 0 9px; }
.list { display: flex; flex: 1; height: 258px; padding: 2px 1px 1px 2px; background: #fff; box-shadow: inset 1px 1px #848284, inset -1px -1px #fff, inset 2px 2px #424142; }
.list ul { flex: 1; margin: 0; padding: 0; list-style: none; overflow: hidden; background: repeating-linear-gradient(#848284 0 1px, #fff 1px 2px) 11px 0/1px 100% no-repeat, repeating-linear-gradient(#848284 0 1px, #fff 1px 2px) 32px 18px/1px 100% no-repeat; }
.list li { display: flex; align-items: center; height: 18px; padding-left: 33px; font-size: 11px; white-space: nowrap; }
.list li span { margin-left: 4px; padding: 0 2px; line-height: 18px; }
.list li b { font-weight: normal; font-size: 12px; }
.list li.root { padding-left: 7px; font-size: 12px; }
.list .sel span { background: #08246b; color: #fff; }
.box { width: 9px; height: 9px; border: 1px solid #848284; background: linear-gradient(#000, #000) 1px 3px/5px 1px no-repeat #fff; }
.dots { width: 11px; height: 1px; background: repeating-linear-gradient(90deg, #848284 0 1px, transparent 1px 2px); }
.root .dots { width: 6px; }
.gold rect { fill: #ffd34a; stroke: #bd8618; } .gold text { fill: #946100; }
.grey rect { fill: #e7e7e7; stroke: #a5a6a5; } .grey text { fill: #949294; }
.scroll { display: flex; flex-direction: column; width: 16px; background: conic-gradient(#fff 25%, #d6d3ce 0 50%, #fff 0 75%, #d6d3ce 0) 0 0/2px 2px; }
.scroll button { height: 16px; padding: 6px 4px; }
.scroll button::after { content: ""; display: block; border: 4px solid transparent; }
.up::after { border-top: 0 !important; border-bottom-color: #000 !important; }
.down { margin-top: auto !important; }
.down::after { border-bottom: 0 !important; border-top-color: #000 !important; }
.thumb { height: 26px; margin-top: 12px; }
.actions { display: flex; flex-direction: column; gap: 5px; width: 95px; }
.actions .btn { height: 23px; }
.actions .btn:disabled { color: #848284; text-shadow: 1px 1px #fff; }
.actions .close { margin-top: auto; border: 1px solid #000; }

.marks { position: absolute; left: 0; top: 0; pointer-events: none; }
</style>
